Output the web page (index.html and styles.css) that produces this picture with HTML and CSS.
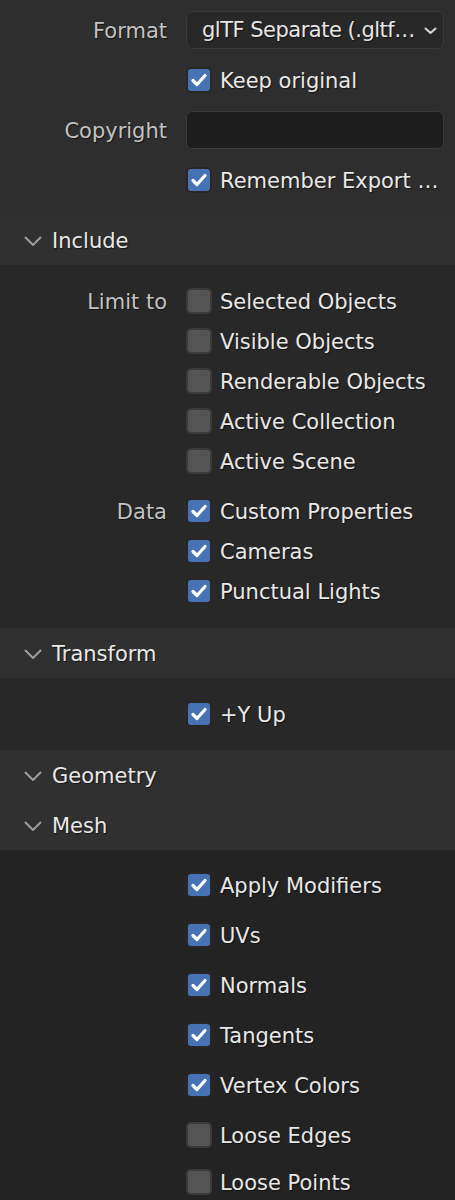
FILE: index.html
```html
<!DOCTYPE html>
<html>
<head>
<meta charset="utf-8">
<link rel="stylesheet" href="styles.css">
</head>
<body>
<div class="region top">
  <div class="row r50">
    <div class="lbl">Format</div>
    <div class="ctl">
      <div class="field dropdown">
        <span class="dd-text">glTF Separate (.gltf…</span>
        <svg class="dd-chev" width="13" height="8" viewBox="0 0 13 8"><path d="M1.5 1.5 L6.5 6 L11.5 1.5" fill="none" stroke="#d8d8d8" stroke-width="2" stroke-linecap="round" stroke-linejoin="round"/></svg>
      </div>
    </div>
  </div>
  <div class="row r50">
    <div class="lbl"></div>
    <div class="ctl"><span class="cb on"><svg width="26" height="26" viewBox="0 0 26 26"><path d="M7 13.5 L11 17.5 L19 8.5" fill="none" stroke="#fff" stroke-width="3.2" stroke-linecap="round" stroke-linejoin="round"/></svg></span><span class="txt">Keep original</span></div>
  </div>
  <div class="row r50">
    <div class="lbl">Copyright</div>
    <div class="ctl"><div class="field"></div></div>
  </div>
  <div class="row r50">
    <div class="lbl"></div>
    <div class="ctl"><span class="cb on"><svg width="26" height="26" viewBox="0 0 26 26"><path d="M7 13.5 L11 17.5 L19 8.5" fill="none" stroke="#fff" stroke-width="3.2" stroke-linecap="round" stroke-linejoin="round"/></svg></span><span class="txt">Remember Export …</span></div>
  </div>
</div>

<div class="hdr"><svg class="hchev" width="18" height="10" viewBox="0 0 18 10"><path d="M1 1 L9 9 L17 1" fill="none" stroke="#9e9e9e" stroke-width="2"/></svg><span class="htxt">Include</span></div>
<div class="body inc">
  <div class="row r40">
    <div class="lbl">Limit to</div>
    <div class="ctl"><span class="cb"></span><span class="txt">Selected Objects</span></div>
  </div>
  <div class="row r40"><div class="lbl"></div><div class="ctl"><span class="cb"></span><span class="txt">Visible Objects</span></div></div>
  <div class="row r40"><div class="lbl"></div><div class="ctl"><span class="cb"></span><span class="txt">Renderable Objects</span></div></div>
  <div class="row r40"><div class="lbl"></div><div class="ctl"><span class="cb"></span><span class="txt">Active Collection</span></div></div>
  <div class="row r40"><div class="lbl"></div><div class="ctl"><span class="cb"></span><span class="txt">Active Scene</span></div></div>
  <div class="group-gap"></div>
  <div class="row r40">
    <div class="lbl">Data</div>
    <div class="ctl"><span class="cb on"><svg width="26" height="26" viewBox="0 0 26 26"><path d="M7 13.5 L11 17.5 L19 8.5" fill="none" stroke="#fff" stroke-width="3.2" stroke-linecap="round" stroke-linejoin="round"/></svg></span><span class="txt">Custom Properties</span></div>
  </div>
  <div class="row r40"><div class="lbl"></div><div class="ctl"><span class="cb on"><svg width="26" height="26" viewBox="0 0 26 26"><path d="M7 13.5 L11 17.5 L19 8.5" fill="none" stroke="#fff" stroke-width="3.2" stroke-linecap="round" stroke-linejoin="round"/></svg></span><span class="txt">Cameras</span></div></div>
  <div class="row r40"><div class="lbl"></div><div class="ctl"><span class="cb on"><svg width="26" height="26" viewBox="0 0 26 26"><path d="M7 13.5 L11 17.5 L19 8.5" fill="none" stroke="#fff" stroke-width="3.2" stroke-linecap="round" stroke-linejoin="round"/></svg></span><span class="txt">Punctual Lights</span></div></div>
</div>

<div class="hdr"><svg class="hchev" width="18" height="10" viewBox="0 0 18 10"><path d="M1 1 L9 9 L17 1" fill="none" stroke="#9e9e9e" stroke-width="2"/></svg><span class="htxt">Transform</span></div>
<div class="body tr">
  <div class="row r40"><div class="lbl"></div><div class="ctl"><span class="cb on"><svg width="26" height="26" viewBox="0 0 26 26"><path d="M7 13.5 L11 17.5 L19 8.5" fill="none" stroke="#fff" stroke-width="3.2" stroke-linecap="round" stroke-linejoin="round"/></svg></span><span class="txt">+Y Up</span></div></div>
</div>

<div class="hdr"><svg class="hchev" width="18" height="10" viewBox="0 0 18 10"><path d="M1 1 L9 9 L17 1" fill="none" stroke="#9e9e9e" stroke-width="2"/></svg><span class="htxt">Geometry</span></div>
<div class="hdr"><svg class="hchev" width="18" height="10" viewBox="0 0 18 10"><path d="M1 1 L9 9 L17 1" fill="none" stroke="#9e9e9e" stroke-width="2"/></svg><span class="htxt">Mesh</span></div>
<div class="body mesh">
  <div class="row r50"><div class="lbl"></div><div class="ctl"><span class="cb on"><svg width="26" height="26" viewBox="0 0 26 26"><path d="M7 13.5 L11 17.5 L19 8.5" fill="none" stroke="#fff" stroke-width="3.2" stroke-linecap="round" stroke-linejoin="round"/></svg></span><span class="txt">Apply Modifiers</span></div></div>
  <div class="row r50"><div class="lbl"></div><div class="ctl"><span class="cb on"><svg width="26" height="26" viewBox="0 0 26 26"><path d="M7 13.5 L11 17.5 L19 8.5" fill="none" stroke="#fff" stroke-width="3.2" stroke-linecap="round" stroke-linejoin="round"/></svg></span><span class="txt">UVs</span></div></div>
  <div class="row r50"><div class="lbl"></div><div class="ctl"><span class="cb on"><svg width="26" height="26" viewBox="0 0 26 26"><path d="M7 13.5 L11 17.5 L19 8.5" fill="none" stroke="#fff" stroke-width="3.2" stroke-linecap="round" stroke-linejoin="round"/></svg></span><span class="txt">Normals</span></div></div>
  <div class="row r50"><div class="lbl"></div><div class="ctl"><span class="cb on"><svg width="26" height="26" viewBox="0 0 26 26"><path d="M7 13.5 L11 17.5 L19 8.5" fill="none" stroke="#fff" stroke-width="3.2" stroke-linecap="round" stroke-linejoin="round"/></svg></span><span class="txt">Tangents</span></div></div>
  <div class="row r50"><div class="lbl"></div><div class="ctl"><span class="cb on"><svg width="26" height="26" viewBox="0 0 26 26"><path d="M7 13.5 L11 17.5 L19 8.5" fill="none" stroke="#fff" stroke-width="3.2" stroke-linecap="round" stroke-linejoin="round"/></svg></span><span class="txt">Vertex Colors</span></div></div>
  <div class="row r50"><div class="lbl"></div><div class="ctl"><span class="cb"></span><span class="txt">Loose Edges</span></div></div>
  <div class="row r44"><div class="lbl"></div><div class="ctl"><span class="cb"></span><span class="txt">Loose Points</span></div></div>
</div>
</body>
</html>
```

FILE: styles.css
```css
html, body {
  margin: 0;
  padding: 0;
  background: #232323;
}
body {
  width: 455px;
  height: 1200px;
  overflow: hidden;
  font-family: "DejaVu Sans", "Liberation Sans", sans-serif;
  font-size: 21px;
  color: #e6e6e6;
}
.region.top {
  background: #2e2e2e;
  padding: 5px 0 10px 0;
}
.row {
  display: flex;
  align-items: center;
}
.r50 { height: 50px; }
.r40 { height: 40px; }
.r44 { height: 44px; }
.lbl {
  width: 167px;
  flex: none;
  margin-right: 19px;
  padding-top: 2px;
  text-align: right;
  color: #c2c2c2;
  text-shadow: 1px 1px 1px rgba(0, 0, 0, 0.55);
  white-space: nowrap;
}
.ctl {
  display: flex;
  align-items: center;
  gap: 8px;
  white-space: nowrap;
}
.txt {
  padding-top: 2px;
  color: #e8e8e8;
  text-shadow: 1px 1px 1px rgba(0, 0, 0, 0.55);
}
.field {
  box-sizing: border-box;
  width: 258px;
  height: 38px;
  background: #1d1d1d;
  border: 1px solid #3a3a3a;
  border-radius: 6px;
}
.dropdown {
  display: flex;
  align-items: center;
  padding-left: 15px;
  padding-right: 6px;
  background: #282828;
}
.dd-text {
  flex: 1;
  letter-spacing: -0.5px;
  color: #e6e6e6;
  text-shadow: 1px 1px 1px rgba(0, 0, 0, 0.55);
}
.dd-chev {
  flex: none;
  margin-top: 2px;
}
.cb {
  box-sizing: border-box;
  width: 26px;
  height: 26px;
  flex: none;
  border-radius: 5px;
  background: #545454;
  border: 2px solid #3b3b3b;
  display: flex;
  align-items: center;
  justify-content: center;
  overflow: hidden;
}
.cb.on {
  background: #4772b3;
  border-color: #272727;
}
.cb svg {
  flex: none;
}
.hdr {
  height: 50px;
  background: #303030;
  display: flex;
  align-items: center;
  padding-left: 24px;
  color: #e8e8e8;
  text-shadow: 1px 1px 1px rgba(0, 0, 0, 0.55);
}
.htxt {
  padding-top: 2px;
}
.hchev {
  flex: none;
  margin-right: 10px;
  margin-top: 1px;
}
.body.inc {
  background: #282828;
  padding: 16px 0 17px 0;
}
.group-gap {
  height: 10px;
}
.body.tr {
  background: #282828;
  padding: 16px 0 16px 0;
}
.body.mesh {
  background: #232323;
  padding: 10px 0 0 0;
}
```
